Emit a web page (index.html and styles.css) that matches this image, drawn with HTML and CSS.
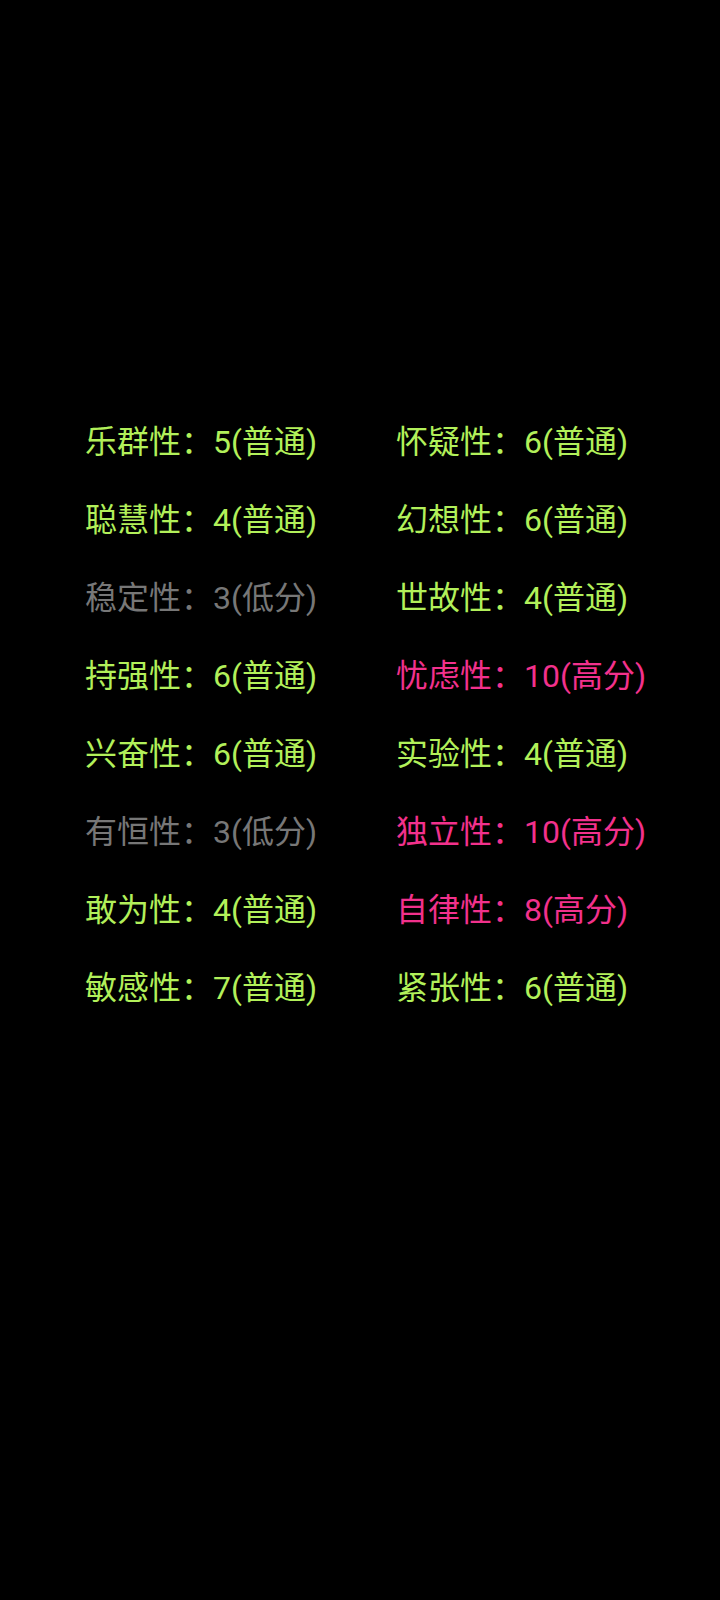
FILE: index.html
```html
<!DOCTYPE html>
<html lang="zh-CN">
<head>
<meta charset="utf-8">
<link rel="stylesheet" href="styles.css">
</head>
<body>
<div class="grid">
  <div class="item normal">乐群性：5(普通)</div>
  <div class="item normal">怀疑性：6(普通)</div>
  <div class="item normal">聪慧性：4(普通)</div>
  <div class="item normal">幻想性：6(普通)</div>
  <div class="item low">稳定性：3(低分)</div>
  <div class="item normal">世故性：4(普通)</div>
  <div class="item normal">持强性：6(普通)</div>
  <div class="item high">忧虑性：10(高分)</div>
  <div class="item normal">兴奋性：6(普通)</div>
  <div class="item normal">实验性：4(普通)</div>
  <div class="item low">有恒性：3(低分)</div>
  <div class="item high">独立性：10(高分)</div>
  <div class="item normal">敢为性：4(普通)</div>
  <div class="item high">自律性：8(高分)</div>
  <div class="item normal">敏感性：7(普通)</div>
  <div class="item normal">紧张性：6(普通)</div>
</div>
</body>
</html>
```
FILE: styles.css
```css
html, body {
  margin: 0;
  padding: 0;
  background: #000;
}
body {
  width: 720px;
  height: 1600px;
  font-family: Roboto, "Noto Sans CJK SC", sans-serif;
}
.grid {
  display: grid;
  grid-template-columns: 311px 311px;
  padding-top: 403px;
  padding-left: 85px;
}
.item {
  font-size: 32px;
  line-height: 78px;
  height: 78px;
  white-space: nowrap;
}
.normal { color: #b2f05a; }
.low { color: #777777; }
.high { color: #f2318c; }
```
